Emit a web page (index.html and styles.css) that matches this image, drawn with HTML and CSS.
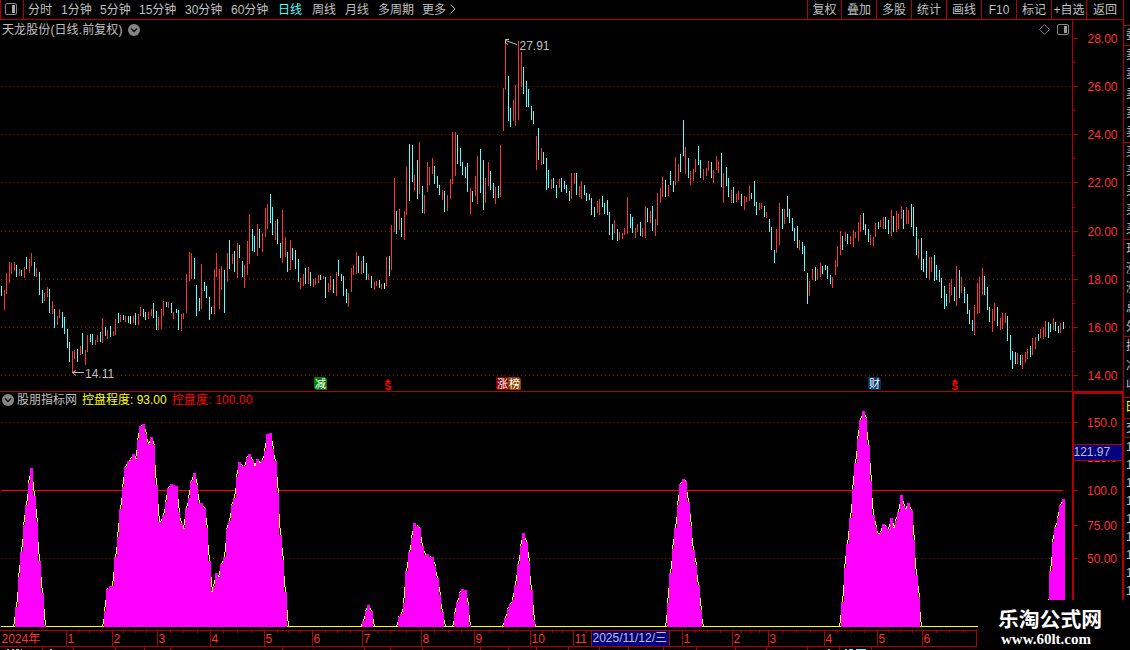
FILE: index.html
```html
<!DOCTYPE html>
<html lang="zh-CN">
<head>
<meta charset="utf-8">
<title>天龙股份 日线</title>
<link rel="stylesheet" href="styles.css">
</head>
<body>
<div class="app">
  <main class="main">
    <header class="toolbar">
      <div class="layout-toggle">
        <svg width="12" height="12" viewBox="0 0 12 12"><rect x=".5" y=".5" width="11" height="11" rx="1.5" fill="none" stroke="#888"/><rect x="7" y="2" width="3" height="8" fill="#aaa"/></svg>
      </div>
      <nav class="periods">
        <span>分时</span><span>1分钟</span><span>5分钟</span><span>15分钟</span><span>30分钟</span><span>60分钟</span><span class="active">日线</span><span>周线</span><span>月线</span><span>多周期</span><span>更多</span>
        <svg width="8" height="10" viewBox="0 0 8 10"><path d="M1.5 .5L6 5L1.5 9.5" fill="none" stroke="#c0c0c0"/></svg>
      </nav>
      <nav class="tools">
        <span>复权</span><span>叠加</span><span>多股</span><span>统计</span><span>画线</span><span>F10</span><span>标记</span><span>+自选</span><span>返回</span>
      </nav>
    </header>
    <section class="panel price-panel">
      <svg id="price" width="1124" height="372" viewBox="0 20 1124 372"></svg>
      <div class="caption">
        <span class="stock-name">天龙股份(日线.前复权)</span>
        <svg width="12" height="12" viewBox="0 0 12 12"><circle cx="6" cy="6" r="6" fill="#858585"/><path d="M3 4.5L6 7.5L9 4.5" fill="none" stroke="#111" stroke-width="1.4"/></svg>
      </div>
    </section>
    <section class="panel">
      <svg id="indicator" width="1124" height="238" viewBox="0 392 1124 238"></svg>
      <div class="caption indicator-caption">
        <svg width="12" height="12" viewBox="0 0 12 12"><circle cx="6" cy="6" r="6" fill="#858585"/><path d="M3 4.5L6 7.5L9 4.5" fill="none" stroke="#111" stroke-width="1.4"/></svg>
        <span>股朋指标网</span><span class="yellow">控盘程度: 93.00</span><span class="red">控盘度: 100.00</span>
      </div>
    </section>
    <svg id="timeline" width="1124" height="20" viewBox="0 630 1124 20"></svg>
  </main>
  <aside class="quotes" id="quotes"></aside>
  <div class="brand"><strong>乐淘公式网</strong><span>www.60lt.com</span></div>
</div>
<script src="chart.js"></script>
</body>
</html>
```
FILE: styles.css
```css
* { box-sizing: border-box; }
body {
  margin: 0;
  background: #000;
  overflow: hidden;
  color: #c0c0c0;
  font: 12px/14px "Liberation Sans", "Noto Sans CJK SC", sans-serif;
}
svg { display: block; }
.app { position: relative; display: flex; width: 1130px; height: 650px; overflow: hidden; }
.main { width: 1124px; flex: none; }
.toolbar {
  display: flex;
  height: 20px;
  border-bottom: 1px solid #b00000;
  border-right: 1px solid #b00000;
  line-height: 20px;
  white-space: nowrap;
}
.layout-toggle {
  width: 24px;
  padding: 3px 0 0 4px;
  border: solid #b00000;
  border-width: 0 1px;
}
.periods {
  display: grid;
  grid-template-columns: 33px 39px 39px 46px 46px 47px 34px 33px 33px 44px 27px 10px;
  grid-template-rows: 19px;
  padding-left: 4px;
}
.periods svg { margin-top: 4px; }
.active { color: #54ffff; }
.tools {
  display: grid;
  grid-template-columns: 34px repeat(7, 35px) 37px;
  margin-left: auto;
  text-align: center;
}
.tools span { border-left: 1px solid #b00000; }
.panel { position: relative; }
.caption {
  position: absolute;
  left: 2px;
  top: 2px;
  display: flex;
  align-items: center;
  gap: 5px;
  white-space: nowrap;
}
.caption span { line-height: 17px; }
.caption svg { margin-top: -1px; }
.stock-name { letter-spacing: .1px; }
.indicator-caption { top: 0; gap: 3px; }
.yellow { color: #ff0; }
.red { color: #f00; letter-spacing: .15px; }
.caption .yellow, .caption .red { margin-left: 2px; }
.chart-text { font: 12px "Liberation Sans", "Noto Sans CJK SC", sans-serif; fill: #c0c0c0; }
.axis-text { fill: #ff3232; }
.tag-text { font-size: 11px; fill: #fff; }
.dividend { font-size: 10px; font-weight: bold; fill: #f00; }
.quotes { width: 6px; flex: none; overflow: hidden; }
.quote-group { border-bottom: 1px solid #b00000; overflow: hidden; }
.quote-group div { width: 14px; margin-left: 2px; }
.quote-group.yellow div { margin-left: 1px; }
.brand {
  position: absolute;
  left: 978px;
  top: 600px;
  width: 152px;
  height: 50px;
  display: flex;
  flex-direction: column;
  padding: 7px 0 0 20px;
  background: #000;
  color: #fff;
}
.brand strong { font: bold 20.8px/23px "Noto Sans CJK SC", sans-serif; white-space: nowrap; }
.brand span { padding: 1px 0 0 3px; font: bold 15px/17px "Liberation Serif", serif; }
```
FILE: chart.js
```js
const LINE = '#b00000';
const COLORS = { r: '#ff3232', c: '#54ffff', w: '#ffffff' };
const rect = (x, y, w, h, fill) => `<rect x="${x}" y="${y}" width="${w}" height="${h}" fill="${fill}"/>`;
const text = (x, y, s, cls = '') => `<text x="${x}" y="${y}" class="chart-text ${cls}">${s}</text>`;
const dots = y => `<path d="M1 ${y + .5}H1071" stroke="#a00000" stroke-dasharray="1 3"/>`;

// Each segment has an origin in pixels; its values are in thirds of a pixel: colour+x:high-low.
const candles = [
  [0, 230, `c4:168-198 r13:180-240 r19:129-192 r28:96-159 r34:99-132 r43:96-123 c49:105-141 r58:117-138 c64:120-138 r73:111-144 c79:81-117 r88:87-129 r94:69-108 c103:96-138 r109:114-141 c118:126-195 c127:180-219 r133:189-213 r142:171-201 c148:177-249 r157:213-252 c163:237-294 r172:258-285 r178:237-264 c187:246-294 c193:261-312 c202:297-354 c208:336-396 r217:363-430 r223:360-387 c232:357-396 r241:348-375 c247:309-372 r256:360-405 r262:315-366 c271:312-336 c277:312-345 r286:330-345 r292:315-336 c301:306-336 r307:264-339 c316:291-318 r322:300-327 c331:288-321 r340:303-318 r346:267-315 c355:249-279 r361:255-276 c370:255-270 r376:258-276 c385:258-279 w391:258-282 r400:258-279 c406:249-285 r415:252-285 r421:231-258 c430:237-261 c436:246-270 r445:246-267 r454:237-258 c460:219-264 c469:243-300 r475:261-300 r484:237-297 r490:213-258 c499:216-231 r505:216-234 c514:219-249 r520:246-267 c529:237-249 c535:240-300 r544:252-303 r550:249-267 r559:132-249 r568:66-153 r574:69-147 c583:84-147 c589:165-258 c598:204-243 r604:102-237 c613:156-183 c619:168-204 c628:201-270 c634:231-252 r643:117-252 r649:69-141 r658:117-237 r664:108-180 c673:120-249`],
  [150, 180, `r232:219-306 c238:180-267 r247:222-252 c253:213-276 r262:189-294 c268:195-234 c277:243-291 r283:255-324 r292:183-285 r298:102-252 c307:147-213 c313:168-216 r322:132-228 c328:147-204 r337:159-216 r346:84-171 r352:72-147 c361:42-129 c367:81-165 r376:123-180 c382:117-192 c391:189-234 r397:90-249 r406:171-231 c412:216-276 r421:180-270 c427:204-240 c436:210-267 c445:237-306 r451:294-327 r460:282-318 c466:264-312 r475:261-312`],
  [270, 130, `c121:426-468 r130:447-471 r136:444-465 r145:435-459 c151:435-450 r160:438-447 c166:441-504 r175:459-486 r181:438-480 c190:447-489 r199:426-498 c205:390-438 c214:432-453 c220:438-498 c229:477-519 r235:489-531 r244:414-486 r250:405-435 r259:366-432 c265:378-429 r274:393-432 c280:378-429 c289:399-450 r295:432-450 c304:438-474 r313:456-480 r319:453-468 c328:450-474 r334:462-477 w343:459-477 r349:381-468 c358:378-438 r364:285-420 r373:144-306 c379:243-312 r388:237-300 c394:264-321 r403:243-330 r409:111-255 c418:42-213 c427:45-156 r433:135-183 c442:90-207 r448:36-192 c457:168-249 r463:195-252 r472:96-186 r478:111-165 r487:84-132 c493:108-162 c502:138-174 c508:165-195 r517:180-210 c523:183-246 r532:195-243 r541:147-207 r547:6-162 r556:6-138 c562:15-102 c571:54-108 c577:96-135 c586:111-144 c592:99-186 r601:174-252 c607:183-216 r616:138-198 r622:78-222 c631:57-189 c640:90-240 r646:144-219 r655:96-168 c661:123-180 c670:159-204 r676:171-222 c685:168-204 r691:45-201`],
  [490, 30, `r40:174-303 r46:39-177 c55:138-273 c61:234-291 r70:210-273 r76:165-288 r85:33-270 r94:66-171 c100:111-192 c109:153-231 c115:177-231 c124:228-270 c130:243-282 r139:318-420 c145:294-390 r154:354-405 c160:366-402 c169:384-480 c175:420-474 r184:447-477 c190:444-474 c199:465-504 r208:447-474 c214:444-486 c223:453-477 c229:465-489 c238:483-513 r244:429-507 r253:429-462 c259:429-495 r268:468-501 r274:453-507 c283:465-495 c289:489-513 c298:492-510 c304:504-555 c313:531-561 r322:513-549 r328:507-555 c337:498-531 c343:519-552 c352:510-555 c358:546-615 c367:582-630 r373:570-609 c382:597-633 r388:606-630 r397:609-627 r403:594-615 r412:501-612 c421:552-594 c427:561-609 r436:594-624 r442:582-606 c451:576-618 r457:594-621 r466:528-624 c472:534-576 r481:543-579 c487:528-603 r496:567-618 r502:489-585 r511:474-519 r517:441-501 c526:450-501 r535:465-498 c541:423-465 c550:453-486 r556:381-465 r565:402-453 c571:372-426 c580:270-378 r586:351-432 c595:384-444 r601:423-465 r610:417-453 r616:387-426 c625:348-405 c631:390-444 r640:417-450 r649:414-438 r655:393-423 c664:396-444 r670:420-459 r679:378-420 r685:393-429 c694:369-471 r700:429-519 c709:411-468 c715:444-501 r724:480-519 c730:471-519 r739:492-516 r745:483-510 c754:492-528 r763:498-540 r769:501-516 r778:468-513`],
  [750, 170, `c4:69-87 c13:33-108 c19:96-135 r28:99-120 r34:99-117 c43:108-141 r49:126-144 c58:147-186 c64:171-240 c73:240-279 r79:177-249 r88:99-225 c97:117-177 r103:117-162 c112:78-141 c118:117-159 c127:144-183 c133:174-213 c142:168-234 r148:210-240 c157:216-252 c163:228-303 c172:309-402 r178:333-378 r187:297-330 c196:291-333 r202:297-330 r211:279-321 c217:288-312 c226:285-300 c232:288-327 c241:315-342 r247:321-354 r256:270-315 r262:228-291 r271:183-255 c277:198-240 r286:186-213 c292:192-222 r301:198-222 r310:180-231 r316:186-204 r325:156-213 r331:135-186 c340:129-180 c346:162-195 c355:177-216 r361:195-225 r370:201-228 r376:159-201 c385:156-177 r391:150-171 r400:141-177 c406:141-177 c415:150-192 r424:120-198 c430:138-186 r439:123-186 r445:132-177 r454:108-147 c460:120-177 r469:111-162 r475:120-162 c484:102-171 c490:111-198 c499:171-255 r505:207-267 c514:204-300 c520:267-306 c529:243-324 r538:261-330 r544:261-306 c553:255-333 c559:285-330 c568:300-336 c574:324-384 c583:348-417 c589:372-408 r598:339-399 r604:327-375 c613:351-393 r619:288-408 c628:300-384 r634:321-369 c643:351-399 c652:372-432 c658:420-462 c667:450-483 r673:405-495 r682:339-432 r688:321-429 r697:294-375 c703:318-375 c712:351-420 c718:411-456 r727:417-486 r733:399-453 c742:411-468 r751:444-480 r757:429-477 r766:429-459 c772:438-513 c781:495-570 c787:543-597 c796:546-582 r802:549-582 c811:555-585 r817:555-597 r826:546-579 r832:537-567 c841:528-561 r847:504-555 r856:501-537 c865:492-513 r871:477-504 r880:471-507 r886:453-501 c895:456-504 c901:462-486 r910:444-480 c916:456-483 c925:468-489 r931:459-489 c940:456-477`]
];

// Price panel
let out = [86, 134, 182, 231, 279, 327, 375].map(dots).join('');
for (const [ox, oy, data] of candles) {
  for (const item of data.split(' ')) {
    const [, c, x, a, b] = item.match(/(\w)(\d+):(\d+)-(\d+)/);
    const top = Math.round(a / 3);
    out += rect(ox + Math.floor(x / 3), oy + top, 1, Math.round(b / 3) - top, COLORS[c]);
  }
}
out += rect(0, 391, 1124, 1, LINE) + rect(1072, 20, 1, 372, LINE) + rect(1123, 20, 1, 372, LINE);
[38, 86, 134, 182, 231, 279, 327, 375].forEach((y, i) => {
  out += rect(1073, y, 5, 1, LINE) + text(1087.5, y + 5, (28 - 2 * i).toFixed(2), 'axis-text');
});
[62, 110, 158, 207, 255, 303, 351].forEach(y => { out += rect(1073, y, 2, 1, LINE); });
out += `<path d="M84 372.5H72.5M76 370.5L72.5 372.5L76 375.5M517 44.5L505.5 40.5M509 39.5H505.5V43L508 44.5" fill="none" stroke="#c0c0c0"/>`;
out += text(85, 378, '14.11') + text(519.5, 50, '27.91');
[[314, '#008000', '减'], [496, '#880000', '涨'], [508, '#884400', '榜'], [868, '#003366', '财']].forEach(([x, fill, s]) => {
  out += `<path d="M${x} 377h11l2 2v11h-11l-2-2z" fill="${fill}"/>` + text(x + 1, 387.5, s, 'tag-text');
});
[385, 952].forEach(x => {
  out += `<path d="M${x} 382l3-3l3 3z" fill="#f00"/>` + text(x - .5, 390, 'S', 'dividend');
});
out += `<path d="M1044.5 24.5l5 5l-5 5l-5-5z" fill="none" stroke="#777"/>
  <rect x="1057.5" y="24.5" width="11" height="10" rx="1.5" fill="none" stroke="#888"/><rect x="1064" y="26" width="3" height="7" fill="#999"/>`;
document.getElementById('price').innerHTML = out;

// Indicator steps: origin, baseline, right edge, then x:top pairs, in thirds of a pixel.
const humps = [
  [0, 385, 726, 138, '45:666 54:576 60:501 69:420 75:360 84:294 90:249 99:333 108:411 114:528 123:624 132:720'],
  [0, 385, 726, 861, '312:678 318:612 327:603 342:516 351:456 357:372 366:306 372:246 381:228 390:222 396:207 405:222 411:165 417:123 426:117 435:147 441:177 450:156 459:180 465:300 474:411 486:390 495:351 501:309 510:297 519:300 525:303 534:381 540:414 549:432 555:369 564:339 570:288 579:264 588:300 594:354 609:369 618:429 624:528 633:621 639:603 645:564 654:576 660:537 669:516 678:432 684:408 693:360 699:339 708:276 714:231 723:243 738:219 744:207 753:225 762:243 768:222 777:234 783:225 792:198 798:147 807:144 816:192 822:228 831:324 837:450 846:525 852:621'],
  [340, 500, 381, 99, '66:363 75:333 81:315 90:333'],
  [340, 500, 381, 312, '174:351 180:342 189:309 195:213 204:156 213:114 219:69 228:78 237:84 243:138 252:165 258:162 267:171 282:198 288:234 297:285 303:336'],
  [340, 500, 381, 393, '342:342 348:306 357:279 363:267 372:270 381:315 387:375'],
  [340, 500, 381, 585, '492:354 501:327 507:312 516:300 522:255 531:192 540:138 546:99 555:126 564:183 570:270 579:360'],
  [560, 470, 471, 426, '321:399 327:309 336:237 342:174 351:105 357:42 366:27 375:33 381:96 390:168 396:240 405:285 411:345 420:420'],
  [820, 400, 681, 300, '63:606 72:504 78:432 87:354 96:267 102:189 111:117 117:60 126:33 135:54 141:135 150:243 156:345 165:381 171:402 180:396 186:372 195:378 201:387 210:354 219:384 225:363 231:336 240:285 249:318 255:327 261:309 270:330 279:420 285:525 294:591'],
  [820, 400, 681, 735, '687:513 696:426 702:381 711:354 717:315 726:297']
];
out = [422, 490, 558].map(dots).join('') + rect(1, 490, 1062, 1, '#f00') + rect(1, 626, 977, 1, '#ff0');
humps.forEach(([ox, oy, base, end, data], index) => {
  const steps = data.split(' ').map(s => s.split(':').map(v => Math.round(v / 3)));
  const bottom = Math.round(base / 3);
  const open = index === humps.length - 1;
  steps.push([Math.round(end / 3), bottom]);
  let prev = bottom, fill = '', line = '';
  steps.forEach(([x, y], i) => {
    const rise = prev - y;
    const size = Math.abs(rise);
    const high = Math.min(prev, y);
    const last = i === steps.length - 1;
    // The newest bar has no successor, so its line does not fall back.
    if (size > 1 && !(open && last)) {
      const start = high + Math.round(size / 2);
      const kink = high + Math.round(size * .83);
      line += rect(ox + (rise > 0 ? x - 1 : x), oy + start, 1, kink - start, '#ff0');
      line += rect(ox + (rise > 0 ? x - 2 : x + 1), oy + kink, 1, high + size - kink, '#ff0');
    }
    if (!last) fill += rect(ox + x, oy + y, steps[i + 1][0] - x, bottom - y, '#f0f');
    prev = y;
  });
  out += line + fill;
});
out += rect(1072, 392, 2, 238, LINE) + rect(1072, 392, 52, 2, LINE) + rect(1122, 392, 2, 238, LINE);
[[422, '150.0'], [457, '125.0'], [490, '100.0'], [525, '75.00'], [558, '50.00']].forEach(([y, s]) => {
  out += rect(1074, y, 4, 1, LINE) + text(1087, y + 5, s, 'axis-text');
});
out += rect(1074, 444, 48, 17, LINE) + rect(1074, 445, 48, 15, '#000080') + text(1073.5, 456, '121.97');
document.getElementById('indicator').innerHTML = out;

// Time axis
out = rect(0, 630, 977, 1, LINE) + rect(0, 646, 977, 1, LINE);
[[66, 1], [112, 2], [157, 3], [210, 4], [264, 5], [312, 6], [362, 7], [421, 8], [474, 9], [530, 10], [573, 11], [591, ''], [669, ''], [682, 1], [732, 2], [768, 3], [824, 4], [877, 5], [922, 6], [976, '']].forEach(([x, s]) => {
  out += rect(x, 630, 1, 16, LINE) + text(x + 1.5, 643, s, 'axis-text');
});
[78, 89, 101, 123, 135, 146, 170, 183, 197, 223, 237, 251, 277, 288, 300, 325, 337, 350, 377, 390, 406, 434, 448, 461, 489, 503, 516, 542, 552, 562, 586, 695, 707, 720, 741, 750, 759, 782, 796, 810, 837, 851, 864, 888, 900, 912, 936, 949, 963].forEach(x => {
  out += rect(x, 631, 1, 2, LINE);
});
[42, 73, 115, 144, 170, 282, 364, 390, 422, 480, 508, 536, 568, 599, 628, 663, 696, 735, 766, 807, 839, 871].forEach(x => {
  out += rect(x, 647, 1, 3, LINE);
});
out += text(1.5, 643, '2024年', 'axis-text') + rect(592, 631, 77, 15, '#000080') + text(592.5, 642, '2025/11/12/三');
out += `<path d="M7 649.5h2m3 0h2m2 0h3m2 0h1m28 0h2M828 649.5h2" stroke="#c0c0c0"/><path d="M845 649.5h2m2 0h4m3 0h10" stroke="#54ffff"/>`;
document.getElementById('timeline').innerHTML = out;

// Quote column: group height, row height, labels, colour
const groups = [
  [26, 0, '', ''], [20, 19, '委', ''], [97, 19.3, '卖卖卖卖卖', ''], [97, 19.3, '买买买买买', ''],
  [97, 19.6, '现涨涨总外', ''], [61, 19.6, '换净收', ''], [21, 19, '日', 'yellow'], [19, 18, '交', ''], [212, 18, '111111111', '']
];
document.getElementById('quotes').innerHTML = groups.map(([h, row, labels, color]) =>
  `<div class="quote-group ${color}" style="height:${h}px;line-height:${row}px">${[...labels].map(s => `<div>${s}</div>`).join('')}</div>`).join('');
```
